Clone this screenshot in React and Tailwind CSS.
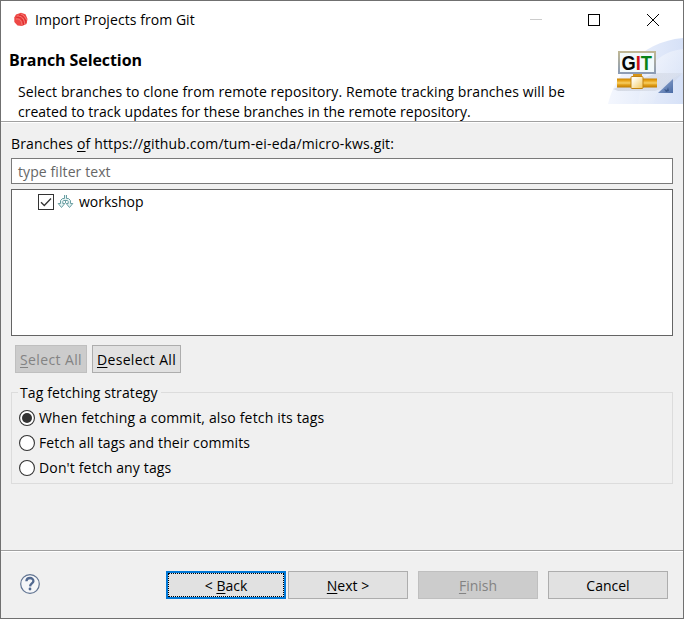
function AppIcon() {
  return (
    <svg className="ml-3 h-4 w-4 shrink-0" viewBox="0 0 16 16">
      <path d="M3 2.500 8 .8l4.500 1.500L14.500 7l-1 5L9 14 4.500 13.500 1.300 10V5.500z" fill="#ee4845" />
      <g fill="none" stroke="#f7928d" strokeWidth=".7">
        <path d="M4 4c4.500-.5 7.500 3 7.800 8.500" />
        <path d="M3 7c3.500-.6 6 2 6 6.500" />
        <path d="M8 2c2.500 1 4.500 3 5.500 6" />
      </g>
      <path d="M3.500 5.500c4-1 7 2 7 7.500M6 3c4 .5 6.500 3.500 7 8" fill="none" stroke="#dc2a2d" strokeWidth="1" />
    </svg>
  );
}

function GitBanner() {
  return (
    <svg className="h-[66px] w-[75px] shrink-0" viewBox="0 0 75 66">
      <defs>
        <linearGradient id="sky" x1="0" y1="0" x2="1" y2="0">
          <stop offset="0" stopColor="#f4f7fe" />
          <stop offset=".55" stopColor="#e4ebfa" />
          <stop offset="1" stopColor="#d6e1f7" />
        </linearGradient>
        <linearGradient id="sweep" x1="0" y1="0" x2="1" y2="1">
          <stop offset="0" stopColor="#fff" />
          <stop offset="1" stopColor="#d6e1f6" />
        </linearGradient>
        <linearGradient id="pipe" x1="0" y1="0" x2="0" y2="1">
          <stop offset="0" stopColor="#c98300" />
          <stop offset=".25" stopColor="#e9a51b" />
          <stop offset=".5" stopColor="#f7cf63" />
          <stop offset=".7" stopColor="#e2a01a" />
          <stop offset="1" stopColor="#c07c00" />
        </linearGradient>
        <linearGradient id="node" x1="0" y1="0" x2="1" y2="1">
          <stop offset=".2" stopColor="#fffdf2" />
          <stop offset="1" stopColor="#f3c657" />
        </linearGradient>
        <linearGradient id="frame" x1="0" y1="0" x2="0" y2="1">
          <stop offset="0" stopColor="#bfb795" />
          <stop offset="1" stopColor="#8c9cb5" />
        </linearGradient>
        <linearGradient id="shade" x1="0" y1="0" x2="1" y2="0">
          <stop offset="0" stopColor="#c4c9d4" stopOpacity=".6" />
          <stop offset="1" stopColor="#c4c9d4" stopOpacity=".25" />
        </linearGradient>
        <linearGradient id="corner" x1="0" y1="0" x2="1" y2="1">
          <stop offset="0" stopColor="#99afd5" />
          <stop offset="1" stopColor="#4a6ba5" />
        </linearGradient>
      </defs>
      <path d="M0 66C6 40 30 4 75 0V66z" fill="url(#sky)" />
      <path d="M30 66C35 30 50 14 75 11V36C60 40 50 50 45 66z" fill="url(#sweep)" opacity=".65" />
      <path d="M5 51 49 35H75L62 48 47 53H10z" fill="url(#shade)" />
      <rect x="11" y="14" width="36" height="21" fill="#f2fafc" stroke="url(#frame)" strokeWidth="2" />
      <text
        x="13.500"
        y="31.800"
        textLength="30.500"
        lengthAdjust="spacingAndGlyphs"
        fontFamily="Liberation Sans, Arial, sans-serif"
        fontWeight="700"
        fontSize="20"
      >
        <tspan fill="#050505">G</tspan>
        <tspan fill="#cf1019">I</tspan>
        <tspan fill="#078316">T</tspan>
      </text>
      <rect x="25" y="36" width="9" height="4" fill="#d79516" />
      <rect x="9" y="40.500" width="40" height="9" fill="url(#pipe)" />
      <rect x="23" y="38.500" width="12" height="12" rx="1" fill="url(#node)" stroke="#c28413" />
      <path d="M65 41V55H50z" fill="url(#corner)" />
      <path d="M56 51l3 1 1-3 1 4-3 1z" fill="#213f71" opacity=".6" />
    </svg>
  );
}

function BranchIcon() {
  return (
    <svg className="ml-[3px] h-4 w-[17px]" viewBox="0 0 17 16" fill="none" stroke="#6a9ea2" strokeWidth="1">
      <path d="M7.500 1V4.500H5.500L3.500 6.500V9.500H1.200L4.500 13.500 7.800 9.500H5.800V7.500L6.500 6.500H10.500L11.200 7.500V9.500H9.200L12.500 13.500 15.800 9.500H13.500V6.500L11.500 4.500H9.500V1" fill="#e3f2f2" />
      <path d="M8.500 7v2" />
    </svg>
  );
}

function Radio({ label, checked, spacing }) {
  return (
    <label className="flex h-[25px] items-center">
      <svg className="mr-[4px] h-4 w-4 shrink-0" viewBox="0 0 16 16">
        <circle cx="8" cy="8" r="7.450" fill="#fff" stroke="#333" strokeWidth="1.100" />
        {checked && <circle cx="8" cy="8" r="5" fill="#333" />}
      </svg>
      <span className={spacing}>{label}</span>
    </label>
  );
}

function FooterButton({ className, children }) {
  return (
    <button className={`flex h-7 w-[120px] items-center justify-center whitespace-pre border pt-px ${className}`}>
      {children}
    </button>
  );
}

const U = ({ children }) => <span className="underline decoration-1 underline-offset-2">{children}</span>;

export default function App() {
  return (
    <div className="flex h-[619px] w-[684px] flex-col overflow-hidden whitespace-nowrap border border-[#707070] bg-[#f0f0f0] font-['Open_Sans','Noto_Sans',sans-serif] text-[14px] leading-5 text-black">
      <header className="h-[120px] shrink-0 bg-white">
        <div className="flex h-[37px] items-center">
          <AppIcon />
          <span className="ml-[6px] tracking-[0.06px]">Import Projects from Git</span>
          <svg className="ml-auto mr-5 h-4 w-[134px]" viewBox="0 0 134 16" fill="none" shapeRendering="crispEdges">
            <path d="M1 7.500h12" stroke="#ccc" />
            <rect x="59.500" y="2.500" width="11" height="11" stroke="#000" />
            <path d="M118 2l12 12M130 2l-12 12" stroke="#000" shapeRendering="auto" />
          </svg>
        </div>
        <div className="flex h-[66px] justify-between">
          <div>
            <h1 className="ml-2 mt-3 text-[16px] font-bold leading-5 tracking-[-0.08px]">Branch Selection</h1>
            <p className="ml-[17px] mt-3">
              <span className="tracking-[0.095px]">Select branches to clone from remote repository. Remote tracking branches will be</span>
              <br />
              <span className="tracking-[0.01px]">created to track updates for these branches in the remote repository.</span>
            </p>
          </div>
          <GitBanner />
        </div>
      </header>
      <div className="h-[2px] shrink-0 border-t border-[#a0a0a0] bg-white" />

      <main className="h-[427px] shrink-0 px-[10px] pt-[11px]">
        <div className="h-6">
          <span className="tracking-[0.155px]">Branches <U>o</U>f https://github.com/tum-ei-eda/micro-kws.git:</span>
        </div>
        <div className="flex h-[26px] items-center border border-[#7a7a7a] bg-white pl-[6px] pt-[2px] text-[#666]">
          <span className="tracking-[0.09px]">type filter text</span>
        </div>
        <div className="mt-[5px] h-[147px] border border-[#646464] bg-white">
          <div className="flex h-6 items-center pl-[26px]">
            <svg className="h-4 w-4" viewBox="0 0 16 16" fill="none">
              <rect x=".5" y=".5" width="15" height="15" stroke="#333" />
              <path d="M3 8.200 6.300 11.500 13 4.500" stroke="#333" strokeWidth="1.300" />
            </svg>
            <BranchIcon />
            <span className="ml-[5px]">workshop</span>
          </div>
        </div>
        <div className="ml-1 mt-[9px] flex gap-[5px]">
          <button className="flex h-7 w-[72px] items-center justify-center border border-[#bfbfbf] bg-[#ccc] pt-[2px] tracking-[0.38px] text-[#838383]">
            <span><U>S</U>elect All</span>
          </button>
          <button className="flex h-7 w-[89px] items-center justify-center border border-[#adadad] bg-[#e1e1e1] pt-[2px] tracking-[0.32px]">
            <span><U>D</U>eselect All</span>
          </button>
        </div>
        <fieldset className="mt-[9px] h-[101px]">
          <div className="flex h-5 items-center">
            <span className="h-px w-[7px] bg-[#dcdcdc]" />
            <span className="pl-[2px] pr-[3px] pt-px tracking-[0.1px]">Tag fetching strategy</span>
            <span className="h-px grow bg-[#dcdcdc]" />
          </div>
          <div className="-mt-[10px] h-[92px] border-x border-b border-[#dcdcdc] pl-[7px] pt-[13px]">
            <Radio checked label="When fetching a commit, also fetch its tags" spacing="tracking-[0.16px]" />
            <Radio label="Fetch all tags and their commits" spacing="tracking-[0.12px]" />
            <Radio label="Don't fetch any tags" spacing="tracking-[0.15px]" />
          </div>
        </fieldset>
      </main>

      <div className="h-[2px] shrink-0 border-t border-[#a0a0a0] bg-white" />
      <footer className="flex h-[66px] shrink-0 items-center pl-[19px] pr-[15px]">
        <svg className="mb-[2px] h-5 w-5" viewBox="0 0 20 20">
          <circle cx="10" cy="10" r="9.300" fill="#f5f6f8" stroke="#607391" strokeWidth="1.200" />
          <path d="M6.400 7.200C6.600 2.900 13.600 3 13.400 7.100 13.300 9.400 10.300 9.500 10.100 12.300" fill="none" stroke="#526990" strokeWidth="2.300" />
          <circle cx="10" cy="15" r="1.400" fill="#526990" />
        </svg>
        <button className="ml-auto h-7 w-[120px] border-2 border-[#0078d7] bg-[#e1e1e1]">
          <span className="flex h-full items-center justify-center whitespace-pre border border-dotted border-black pt-px">{"< "}<U>B</U>ack</span>
        </button>
        <FooterButton className="ml-[2px] border-[#adadad] bg-[#e1e1e1]"><U>N</U>ext &gt;</FooterButton>
        <FooterButton className="ml-[10px] border-[#bfbfbf] bg-[#ccc] text-[#838383]"><U>F</U>inish</FooterButton>
        <FooterButton className="ml-[10px] border-[#adadad] bg-[#e1e1e1]">Cancel</FooterButton>
      </footer>
    </div>
  );
}
